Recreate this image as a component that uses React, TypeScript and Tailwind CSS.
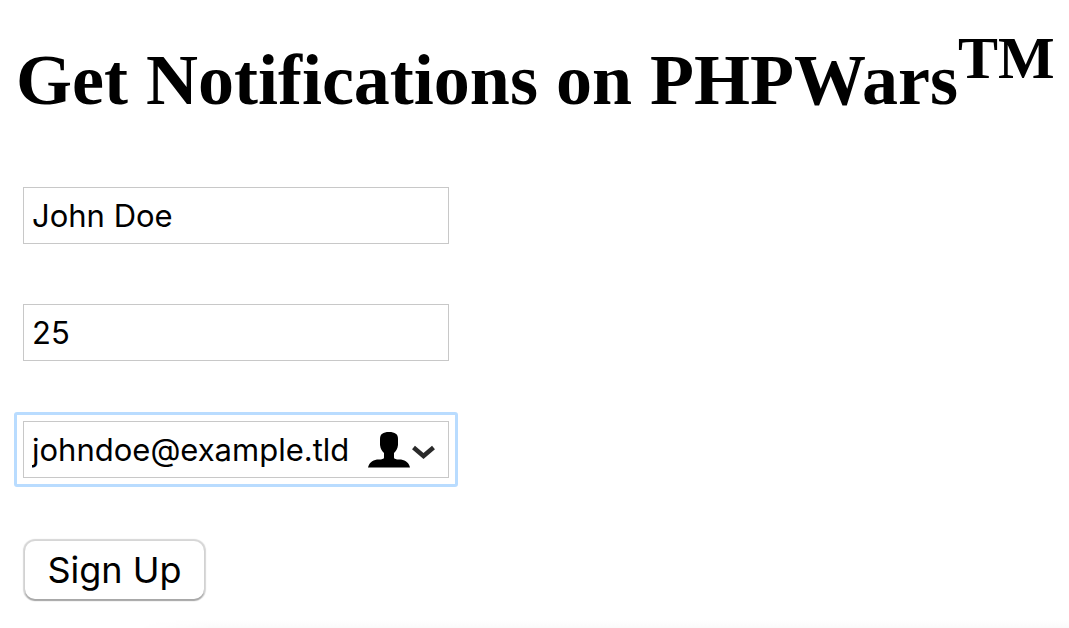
const field =
  "block h-[57px] w-full rounded-none border border-[#c8c8c8] bg-white px-2 text-[31px] leading-10 text-black outline-none";

export default function App() {
  return (
    <main className="flex min-h-screen flex-col bg-white pt-[38px] pl-4 font-['Inter',sans-serif] text-black">
      <h1 className="font-['Liberation_Serif',serif] text-[72px] leading-[84px] font-bold whitespace-nowrap">
        Get Notifications on PHPWars<sup className="-top-[0.43em] text-[60px] leading-none">TM</sup>
      </h1>
      <form
        className="mt-[65px] ml-[7px] flex w-[426px] max-w-full flex-col gap-[60px]"
        onSubmit={(event) => event.preventDefault()}
      >
        <input aria-label="Name" type="text" name="name" defaultValue="John Doe" className={field} />
        <input aria-label="Age" type="text" inputMode="numeric" name="age" defaultValue="25" className={field} />
        <div className="relative -m-[9px] rounded-[3px] border-3 border-[#b9dcff] p-[6px]">
          <input
            aria-label="Email"
            type="email"
            name="email"
            defaultValue="johndoe@example.tld"
            className={field}
          />
          <button
            type="button"
            aria-label="Fill in contact details"
            className="absolute top-4 right-5 flex items-center bg-white"
          >
            <svg width="45" height="37" viewBox="0 0 45 37" fill="black" aria-hidden="true">
              <path d="M22 1c-6 0-9 2-9 7v6c.5 4 2 6 4 8v4.500c0 1-1 1.500-3 2H10C5 29.500 2 32 1 36.500h42c-1-4.500-4-7-9-8h-4c-2-.5-3-1-3-2V22c2-2 3.500-4 4-8V8c0-5-3-7-9-7Z" />
            </svg>
            <svg width="23" height="37" viewBox="0 0 23 37" fill="none" stroke="#2a2a2a" strokeWidth="4.500" aria-hidden="true">
              <path d="m1.500 16.500 10 8.500 10-8.500" />
            </svg>
          </button>
        </div>
        <button
          type="submit"
          className="mt-[3px] ml-0.5 h-[58px] w-[179px] self-start rounded-[10px] bg-white text-[36px] leading-[56px] shadow-[0_2px_1px_#a8a8a8,0_0_1px_2px_#d6d6d6]"
        >
          Sign Up
        </button>
      </form>
      <div className="mt-auto h-2 bg-linear-to-b from-white to-[#fafafa] mask-[linear-gradient(to_right,transparent_120px,black_200px)]" />
    </main>
  );
}
